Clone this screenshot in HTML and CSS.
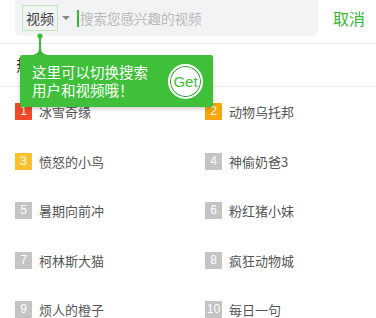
FILE: index.html
```html
<!DOCTYPE html>
<html lang="zh-CN">
<head>
    <meta charset="UTF-8">
    <meta name="viewport" content="width=device-width, initial-scale=1.0">
    <title>搜索</title>
    <link rel="stylesheet" href="styles.css">
</head>
<body>
    <div class="header">
        <div class="search-box">
            <span class="type-switch">视频</span>
            <span class="caret"></span>
            <span class="cursor"></span>
            <span class="placeholder">搜索您感兴趣的视频</span>
        </div>
        <span class="cancel">取消</span>
    </div>

    <div class="section-title">热门搜索</div>

    <div class="hot-list">
        <div class="hot-item"><span class="rank rank-1">1</span>冰雪奇缘</div>
        <div class="hot-item"><span class="rank rank-2">2</span>动物乌托邦</div>
        <div class="hot-item"><span class="rank rank-3">3</span>愤怒的小鸟</div>
        <div class="hot-item"><span class="rank">4</span>神偷奶爸3</div>
        <div class="hot-item"><span class="rank">5</span>暑期向前冲</div>
        <div class="hot-item"><span class="rank">6</span>粉红猪小妹</div>
        <div class="hot-item"><span class="rank">7</span>柯林斯大猫</div>
        <div class="hot-item"><span class="rank">8</span>疯狂动物城</div>
        <div class="hot-item"><span class="rank">9</span>烦人的橙子</div>
        <div class="hot-item"><span class="rank">10</span>每日一句</div>
    </div>

    <!-- guide tip pointing at the type switch -->
    <svg class="tip-pointer" width="20" height="22" viewBox="0 0 20 22">
        <circle cx="10" cy="3" r="2.6" fill="#3dbb38"/>
        <rect x="9" y="3" width="2" height="16" fill="#3dbb38"/>
        <path d="M3 22 Q9 20 9 16 L11 16 Q11 20 17 22 Z" fill="#3dbb38"/>
    </svg>
    <div class="tip">
        <div class="tip-text">这里可以切换搜索<br>用户和视频哦！</div>
        <div class="tip-get">Get</div>
    </div>
</body>
</html>
```

FILE: styles.css
```css
body {
    margin: 0;
    background: #fff;
    font-family: "Noto Sans CJK SC", "Noto Sans", sans-serif;
    color: #333;
    position: relative;
    width: 376px;
    height: 318px;
    overflow: hidden;
}
.header {
    display: flex;
    align-items: flex-start;
    padding: 0 0 0 15px;
    height: 43px;
    border-bottom: 1px solid #ececec;
}
.search-box {
    width: 303px;
    height: 36px;
    background: #f2f3f5;
    border-radius: 0 0 6px 6px;
    display: flex;
    align-items: center;
    padding-left: 7px;
    box-sizing: border-box;
}
.type-switch {
    border: 1px solid #bfe6b9;
    height: 24px;
    line-height: 24px;
    padding: 0 3px;
    font-size: 14px;
    color: #444;
}
.caret {
    width: 0;
    height: 0;
    border-left: 4px solid transparent;
    border-right: 4px solid transparent;
    border-top: 4px solid #888;
    margin-left: 4px;
}
.cursor {
    width: 2px;
    height: 17px;
    background: #2ebb2e;
    margin-left: 7px;
}
.placeholder {
    font-size: 13.5px;
    color: #b9b9b9;
    margin-left: 1px;
}
.cancel {
    font-size: 16px;
    color: #39b636;
    margin-left: 15px;
    line-height: 36px;
}
.section-title {
    height: 42px;
    line-height: 42px;
    padding-left: 16px;
    font-size: 15px;
    color: #333;
    border-bottom: 1px solid #ececec;
}
.hot-list {
    display: grid;
    grid-template-columns: 190px 1fr;
    padding-left: 15px;
}
.hot-item {
    height: 49.5px;
    display: flex;
    align-items: center;
    font-size: 13px;
    color: #555;
}
.rank {
    width: 17px;
    height: 17px;
    line-height: 17px;
    text-align: center;
    background: #c4c4c4;
    color: #fff;
    font-family: "Liberation Sans", Arial, sans-serif;
    font-size: 12px;
    margin-right: 7px;
}
.rank-1 {
    background: #f04a2a;
}
.rank-2 {
    background: #f8a60a;
}
.rank-3 {
    background: #fcc12e;
}
.tip-pointer {
    position: absolute;
    left: 30px;
    top: 33px;
}
.tip {
    position: absolute;
    left: 20px;
    top: 55px;
    width: 193px;
    height: 52px;
    background: #40bf3a;
    border-radius: 2px;
    box-shadow: 0 2px 4px rgba(0, 0, 0, 0.2);
    display: flex;
    align-items: center;
    box-sizing: border-box;
    padding: 0 10px 0 12px;
}
.tip-text {
    color: #fff;
    font-size: 14.5px;
    line-height: 18px;
}
.tip-get {
    margin-left: auto;
    width: 31px;
    height: 31px;
    border-radius: 50%;
    background: #fff;
    border: 2px solid #fff;
    box-shadow: inset 0 0 0 1px #2a9a27;
    color: #40bf3a;
    font-family: "Liberation Sans", Arial, sans-serif;
    font-size: 15px;
    line-height: 31px;
    text-align: center;
}
```
